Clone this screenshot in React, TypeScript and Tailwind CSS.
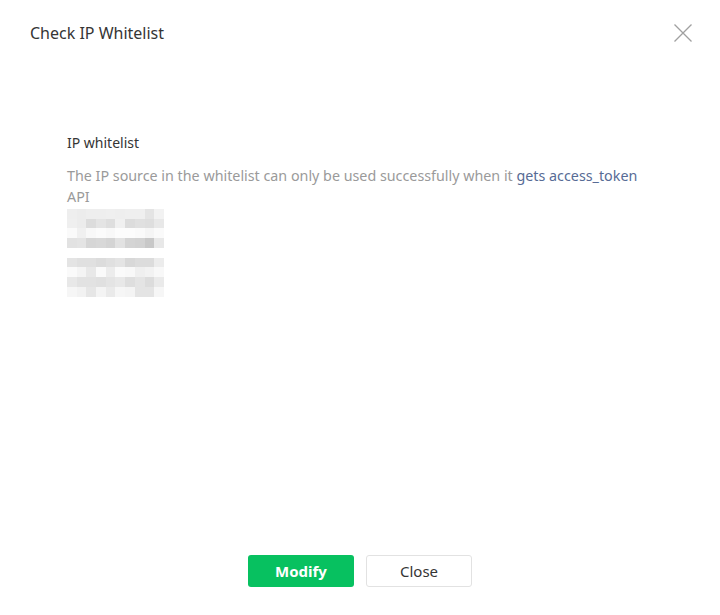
const blockA = [
  ["bg-[#eeeeee]", "bg-[#ececec]", "bg-[#eeeeee]", "bg-[#eeeeee]", "bg-[#efefef]", "bg-[#eeeeee]", "bg-[#efefef]", "bg-[#efefef]", "bg-[#e4e4e4]", "bg-[#f2f2f2]"],
  ["bg-[#efefef]", "bg-[#ececec]", "bg-[#dcdcdc]", "bg-[#e4e4e4]", "bg-[#dedede]", "bg-[#f0f0f0]", "bg-[#dcdcdc]", "bg-[#e0e0e0]", "bg-[#dedede]", "bg-[#e8e8e8]"],
  ["bg-[#fafafa]", "bg-[#f0f0f0]", "bg-[#f8f8f8]", "bg-[#fbfbfb]", "bg-[#f8f8f8]", "bg-[#fcfcfc]", "bg-[#fcfcfc]", "bg-[#fafafa]", "bg-[#f5f5f5]", "bg-[#fafafa]"],
  ["bg-[#e2e2e2]", "bg-[#e4e4e4]", "bg-[#d6d6d6]", "bg-[#d8d8d8]", "bg-[#d4d4d4]", "bg-[#e2e2e2]", "bg-[#d4d4d4]", "bg-[#d2d2d2]", "bg-[#c8c8c8]", "bg-[#e8e8e8]"],
];

const blockB = [
  ["bg-[#e4e4e4]", "bg-[#e0e0e0]", "bg-[#e0e0e0]", "bg-[#dcdcdc]", "bg-[#e0e0e0]", "bg-[#e4e4e4]", "bg-[#d8d8d8]", "bg-[#dcdcdc]", "bg-[#dcdcdc]", "bg-[#ececec]"],
  ["bg-[#fafafa]", "bg-[#f4f4f4]", "bg-[#e8e8e8]", "bg-[#fafafa]", "bg-[#ececec]", "bg-[#fafafa]", "bg-[#f8f8f8]", "bg-[#efefef]", "bg-[#f2f2f2]", "bg-[#f8f8f8]"],
  ["bg-[#e8e8e8]", "bg-[#e2e2e2]", "bg-[#e2e2e2]", "bg-[#e0e0e0]", "bg-[#e4e4e4]", "bg-[#e8e8e8]", "bg-[#dedede]", "bg-[#e4e4e4]", "bg-[#dcdcdc]", "bg-[#eaeaea]"],
  ["bg-[#f6f6f6]", "bg-[#f2f2f2]", "bg-[#e6e6e6]", "bg-[#f4f4f4]", "bg-[#eaeaea]", "bg-[#f6f6f6]", "bg-[#f4f4f4]", "bg-[#e4e4e4]", "bg-[#e4e4e4]", "bg-[#f6f6f6]"],
];

// blurred IP address, drawn as a mosaic
function Mosaic({ rows }: { rows: string[][] }) {
  return (
    <div className="grid grid-cols-[repeat(10,9.7px)] grid-rows-[repeat(4,9.7px)] w-[97px]">
      {rows.flat().map((c, i) => (
        <div key={i} className={c} />
      ))}
    </div>
  );
}

export default function App() {
  return (
    <div className="w-[720px] h-[615px] bg-white flex flex-col font-['Noto_Sans',sans-serif] text-[#333]">
      <header className="flex items-center justify-between pl-[30px] pr-[28px] pt-[20px] h-[46px]">
        <h1 className="text-[16px] leading-[26px] text-[#353535]">Check IP Whitelist</h1>
        <button className="text-[#a0a0a0]">
          <svg width="18" height="18" viewBox="0 0 18 18" fill="none" stroke="currentColor" strokeWidth="1.3">
            <path d="M0.5 0.5L17.5 17.5M17.5 0.5L0.5 17.5" />
          </svg>
        </button>
      </header>

      <main className="flex-1 px-[67px] pt-[87px]">
        <div className="text-[14px] leading-[20px] text-[#353535]">IP whitelist</div>
        <p className="mt-[12px] text-[14.3px] leading-[21px] text-[#9a9a9a] w-[580px]">
          The IP source in the whitelist can only be used successfully when it{" "}
          <a className="text-[#576b95]">gets access_token</a> API
        </p>
        <div className="mt-[2px] flex flex-col gap-[10px]">
          <Mosaic rows={blockA} />
          <Mosaic rows={blockB} />
        </div>
      </main>

      <footer className="flex justify-center gap-[12px] pb-[28px]">
        <button className="w-[106px] h-[32px] rounded-[3px] bg-[#07c160] text-white text-[15px] font-bold">
          Modify
        </button>
        <button className="w-[106px] h-[32px] rounded-[3px] border border-[#e2e2e2] bg-white text-[#353535] text-[15px]">
          Close
        </button>
      </footer>
    </div>
  );
}
